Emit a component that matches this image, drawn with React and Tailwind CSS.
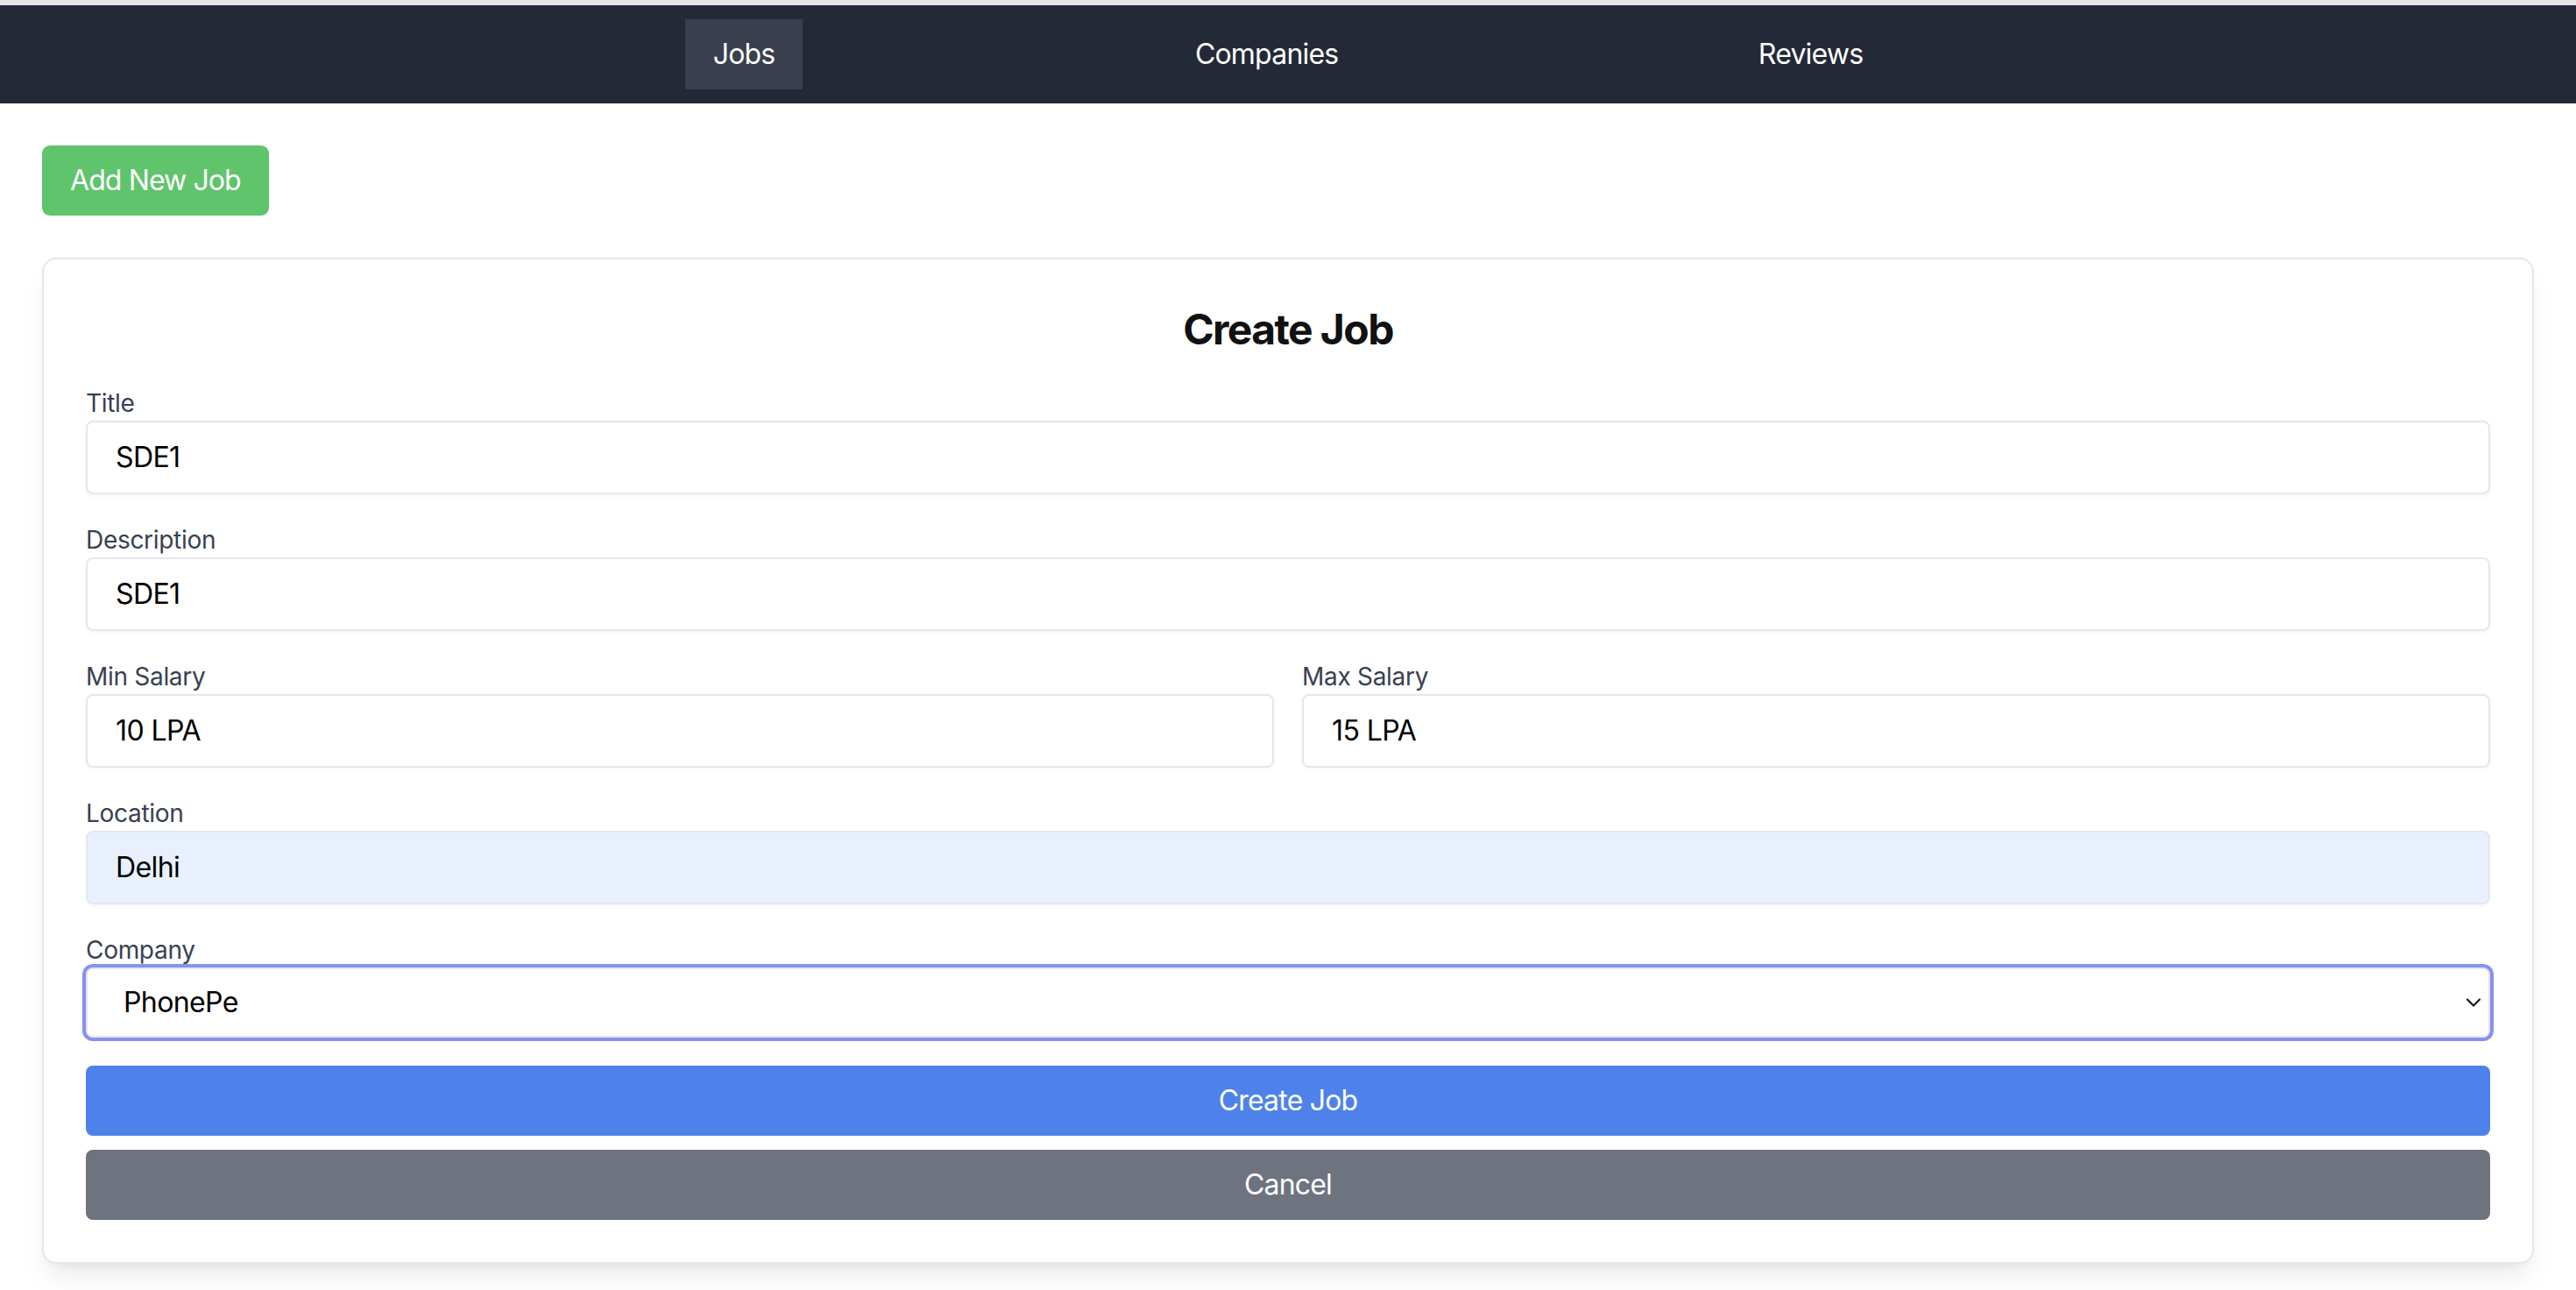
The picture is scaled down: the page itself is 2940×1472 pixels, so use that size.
import React from "react";

function Field({ label, children, className = "" }) {
  return (
    <div className={"mb-[32px] " + className}>
      <label className="block text-[28px] leading-[40px] text-[#374151] tracking-[-0.3px]">{label}</label>
      {children}
    </div>
  );
}

function TextInput({ value, autofill }) {
  return (
    <input
      readOnly
      value={value}
      className={
        "block w-full border-2 border-[#e5e7eb] rounded-[8px] px-[32px] py-[16px] text-[32px] leading-[48px] text-black outline-none tracking-[-0.6px] shadow-[0_2px_4px_rgba(0,0,0,0.04)] font-['Inter',sans-serif] " +
        (autofill ? "bg-[#e8f0fe]" : "bg-white")
      }
    />
  );
}

export default function App() {
  return (
    <div className="min-h-screen bg-white font-['Inter','Helvetica_Neue',Arial,sans-serif]">
      <div className="h-[6px] bg-[#e4e4e7]" />
      <nav className="bg-[#232937] py-[16px]">
        <div className="max-w-[1792px] mx-auto flex justify-around">
          <a className="block px-[32px] py-[16px] text-[32px] leading-[48px] tracking-[-0.8px] text-white bg-[#393f4e]">Jobs</a>
          <a className="block px-[32px] py-[16px] text-[32px] leading-[48px] tracking-[-0.8px] text-white">Companies</a>
          <a className="block px-[32px] py-[16px] text-[32px] leading-[48px] tracking-[-0.8px] text-white">Reviews</a>
        </div>
      </nav>
      <main className="p-[48px]">
        <button className="bg-[#5fc46c] text-white text-[32px] leading-[48px] tracking-[-0.9px] px-[32px] py-[16px] rounded-[9px]">
          Add New Job
        </button>
        <div className="mt-[48px] bg-white border-2 border-[#e5e7eb] rounded-[16px] p-[48px] shadow-[0_20px_30px_-6px_rgba(0,0,0,0.08),0_8px_12px_-8px_rgba(0,0,0,0.08)]">
          <h2 className="text-[48px] leading-[64px] font-bold tracking-[-1.6px] text-center text-[#111] mb-[32px]">Create Job</h2>
          <Field label="Title">
            <TextInput value="SDE1" />
          </Field>
          <Field label="Description">
            <TextInput value="SDE1" />
          </Field>
          <div className="grid grid-cols-2 gap-[32px]">
            <Field label="Min Salary">
              <TextInput value="10 LPA" />
            </Field>
            <Field label="Max Salary">
              <TextInput value="15 LPA" />
            </Field>
          </div>
          <Field label="Location">
            <TextInput value="Delhi" autofill />
          </Field>
          <Field label="Company">
            <div className="relative">
              <select
                defaultValue="PhonePe"
                className="block w-full appearance-none bg-white border-2 border-[#e5e7eb] rounded-[8px] pl-[41px] pr-[48px] py-[14px] text-[32px] leading-[48px] tracking-[-0.6px] text-black outline-none ring-4 ring-[#8891ef] font-['Inter',sans-serif]"
              >
                <option>PhonePe</option>
                <option>Google</option>
                <option>Microsoft</option>
              </select>
              <svg
                className="absolute right-[10px] top-1/2 -translate-y-1/2 pointer-events-none"
                width="18"
                height="12"
                viewBox="0 0 18 12"
                fill="none"
              >
                <path d="M2 2.5 L9 9.5 L16 2.5" stroke="#1a1a1a" strokeWidth="2.2" strokeLinecap="round" strokeLinejoin="round" />
              </svg>
            </div>
          </Field>
          <button className="block w-full bg-[#4e82ea] text-white text-[32px] leading-[48px] tracking-[-0.8px] py-[16px] rounded-[8px]">
            Create Job
          </button>
          <button className="block w-full mt-[16px] bg-[#6e7380] text-white text-[32px] leading-[48px] tracking-[-0.8px] py-[16px] rounded-[8px]">
            Cancel
          </button>
        </div>
      </main>
    </div>
  );
}
